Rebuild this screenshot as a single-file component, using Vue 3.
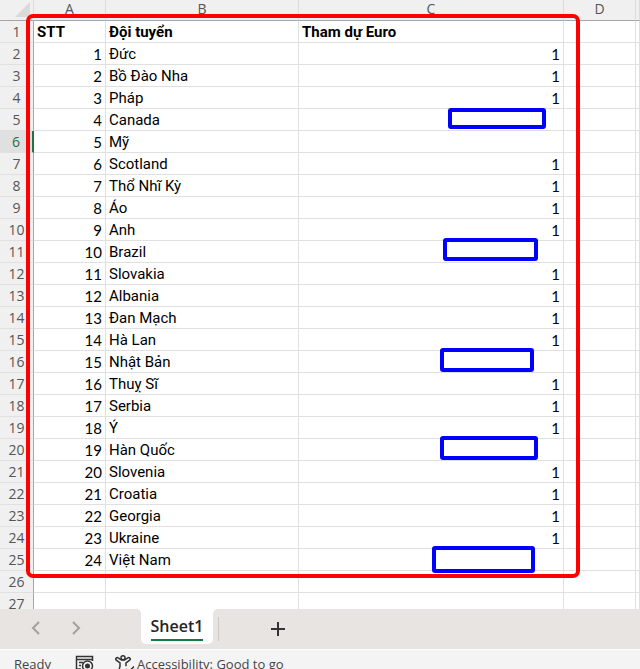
<template>
	<div class="workbook">
		<main class="sheet">
			<table class="grid">
				<colgroup>
					<col class="col-head" />
					<col class="col-a" />
					<col class="col-b" />
					<col class="col-c" />
					<col class="col-d" />
					<col />
				</colgroup>
				<thead>
					<tr>
						<th class="corner">
							<svg width="15" height="15" viewBox="0 0 15 15"><path d="M15 0v15H0z" fill="#dadada" /></svg>
						</th>
						<th v-for="letter in ['A', 'B', 'C', 'D', '']" :key="letter" scope="col">{{ letter }}</th>
					</tr>
				</thead>
				<tbody>
					<tr v-for="(row, i) in rows" :key="i" :class="{ title: i === 0, active: i === 5 }">
						<th scope="row">{{ i + 1 }}</th>
						<td class="num">{{ row[0] }}</td>
						<td>{{ row[1] }}</td>
						<td :class="{ num: i > 0 }">{{ row[2] }}</td>
						<td></td>
						<td></td>
					</tr>
				</tbody>
			</table>
			<div class="frame"></div>
			<div
				v-for="(m, i) in marks"
				:key="i"
				class="mark"
				:style="{ left: m.x + 'px', top: m.y + 'px', width: m.w + 'px', height: m.h + 'px' }"
			></div>
		</main>

		<nav class="tabs">
			<button class="arrow" aria-label="Previous sheet">
				<svg width="9" height="14" viewBox="0 0 9 14"><path d="M8 1L2 7l6 6" /></svg>
			</button>
			<button class="arrow" aria-label="Next sheet">
				<svg width="9" height="14" viewBox="0 0 9 14"><path d="M1 1l6 6-6 6" /></svg>
			</button>
			<button class="tab"><span>Sheet1</span></button>
			<button class="add" aria-label="New sheet">
				<svg width="14" height="14" viewBox="0 0 14 14"><path d="M7 0v14M0 7h14" /></svg>
			</button>
		</nav>

		<footer class="status">
			<span class="ready">Ready</span>
			<button class="macro" aria-label="Record macro">
				<svg width="20" height="18" viewBox="0 0 20 18">
					<path d="M6 14H1.500V1.500h16V6M1.500 4.500h16M4 7.500h4M4 10.500h2" />
					<circle cx="12.500" cy="11" r="5" />
					<circle cx="12.500" cy="11" r="2.500" class="dot" />
				</svg>
			</button>
			<button class="access">
				<svg width="20" height="18" viewBox="0 0 20 18">
					<circle cx="8" cy="2.800" r="2" />
					<path d="M6.200 4.800L3.200 2.800C1.600 2-.2 3.800 1.300 5.200L5 7.800v3.400L3.500 17M9.800 4.800l3-2c1.600-.8 3.400 1 1.900 2.400L11 7.800v3.400M6 5h4M11 14l3 2.500 5-5" />
				</svg>
				Accessibility: Good to go
			</button>
		</footer>
	</div>
</template>

<script setup>
const teams = [
	['Đức', 1],
	['Bồ Đào Nha', 1],
	['Pháp', 1],
	['Canada', ''],
	['Mỹ', ''],
	['Scotland', 1],
	['Thổ Nhĩ Kỳ', 1],
	['Áo', 1],
	['Anh', 1],
	['Brazil', ''],
	['Slovakia', 1],
	['Albania', 1],
	['Đan Mạch', 1],
	['Hà Lan', 1],
	['Nhật Bản', ''],
	['Thuỵ Sĩ', 1],
	['Serbia', 1],
	['Ý', 1],
	['Hàn Quốc', ''],
	['Slovenia', 1],
	['Croatia', 1],
	['Georgia', 1],
	['Ukraine', 1],
	['Việt Nam', '']
]

const rows = [
	['STT', 'Đội tuyển', 'Tham dự Euro'],
	...teams.map(([name, euro], i) => [i + 1, name, euro]),
	['', '', ''],
	['', '', '']
]

// blue boxes drawn over the sheet
const marks = [
	{ x: 448, y: 108, w: 98, h: 21 },
	{ x: 443, y: 238, w: 95, h: 23 },
	{ x: 440, y: 348, w: 94, h: 24 },
	{ x: 440, y: 436, w: 98, h: 24 },
	{ x: 432, y: 546, w: 103, h: 27 }
]
</script>

<style>
body {
	margin: 0;
}
</style>

<style scoped>
.workbook {
	display: flex;
	flex-direction: column;
	height: 100vh;
	overflow: hidden;
	background: #fff;
	font-family: 'Open Sans', 'Noto Sans', sans-serif;
}

.sheet {
	position: relative;
	flex: 1;
	min-height: 0;
	overflow: hidden;
}

.grid {
	width: 100%;
	table-layout: fixed;
	border-collapse: separate;
	border-spacing: 0;
}

.col-head {
	width: 34px;
}
.col-a {
	width: 72px;
}
.col-b {
	width: 193px;
}
.col-c {
	width: 265px;
}
.col-d {
	width: 72px;
}

th,
td {
	box-sizing: border-box;
	padding: 0;
	height: 22px;
	line-height: 20px;
	white-space: nowrap;
	overflow: hidden;
}

th {
	background: #f0f0f0;
	color: #555;
	font-weight: 400;
	font-size: 14px;
	text-align: center;
}

thead th {
	height: 21px;
	line-height: 18px;
	padding-bottom: 2px;
	border-bottom: 1px solid #a6a6a6;
	border-right: 1px solid #dcdcdc;
}

.corner svg {
	display: block;
	margin-left: 15px;
}

tbody th {
	border-bottom: 1px solid #e0e0e0;
	border-right: 1px solid #a6a6a6;
}

td {
	padding: 0 3px;
	border-bottom: 1px solid #e0e0e0;
	border-right: 1px solid #e0e0e0;
	color: #000;
	font-family: Roboto, 'Noto Sans', sans-serif;
	font-size: 15px;
}

.num {
	text-align: right;
	font-family: Lato, 'Noto Sans', sans-serif;
}

.title td {
	text-align: left;
	font-family: Roboto, 'Noto Sans', sans-serif;
	font-weight: 700;
}

.active th {
	background: #e0e0e0;
	color: #217346;
	border-right: 2px solid #217346;
}

.frame {
	position: absolute;
	left: 26px;
	top: 14px;
	width: 554px;
	height: 564px;
	box-sizing: border-box;
	border: 4px solid #f00;
	border-radius: 7px;
}

.mark {
	position: absolute;
	box-sizing: border-box;
	border: 4px solid #00f;
	border-radius: 3px;
}

button {
	display: flex;
	align-items: center;
	padding: 0;
	border: 0;
	background: none;
	color: inherit;
	font: inherit;
}

svg {
	fill: none;
	stroke: currentColor;
}

.corner svg {
	stroke: none;
}

.tabs {
	display: flex;
	flex: none;
	height: 41px;
	box-sizing: border-box;
	padding-left: 31px;
	border-bottom: 1px solid #fff;
	background: #e7e4e2;
}

.arrow {
	width: 41px;
	height: 38px;
	color: #a3a09e;
}

.arrow svg {
	stroke-width: 2;
}

.tab {
	position: relative;
	justify-content: center;
	align-items: flex-start;
	width: 72px;
	height: 35px;
	margin-left: 28px;
	border-radius: 0 0 5px 5px;
	background: #fff;
	color: #252525;
	font-size: 16px;
	font-weight: 600;
}

/* the bar curves away from the tab at its top corners */
.tab::before,
.tab::after {
	content: '';
	position: absolute;
	top: 0;
	width: 5px;
	height: 5px;
}
.tab::before {
	right: 100%;
	background: radial-gradient(circle at 0 100%, #e7e4e2 5px, #fff 5px);
}
.tab::after {
	left: 100%;
	background: radial-gradient(circle at 100% 100%, #e7e4e2 5px, #fff 5px);
}

.tab span {
	height: 32px;
	box-sizing: border-box;
	border-bottom: 2px solid #107c41;
	line-height: 34px;
}

.add {
	width: 70px;
	height: 24px;
	margin: 8px 0 0 5px;
	padding-left: 52px;
	box-sizing: border-box;
	border-left: 1px solid #cbc8c6;
	color: #333;
}

.add svg {
	stroke-width: 2;
}

.status {
	display: flex;
	flex: none;
	height: 19px;
	box-sizing: border-box;
	padding: 5px 0 0 14px;
	overflow: hidden;
	background: #f4f4f4;
	color: #444;
	font-size: 13px;
	line-height: 18px;
}

.status button {
	height: 18px;
}

.ready {
	width: 61px;
}

.macro {
	width: 40px;
}

.access {
	gap: 2px;
}

.macro svg,
.access svg {
	flex: none;
	color: #333;
	stroke-width: 1.5;
}

.dot {
	fill: #333;
	stroke: none;
}
</style>
